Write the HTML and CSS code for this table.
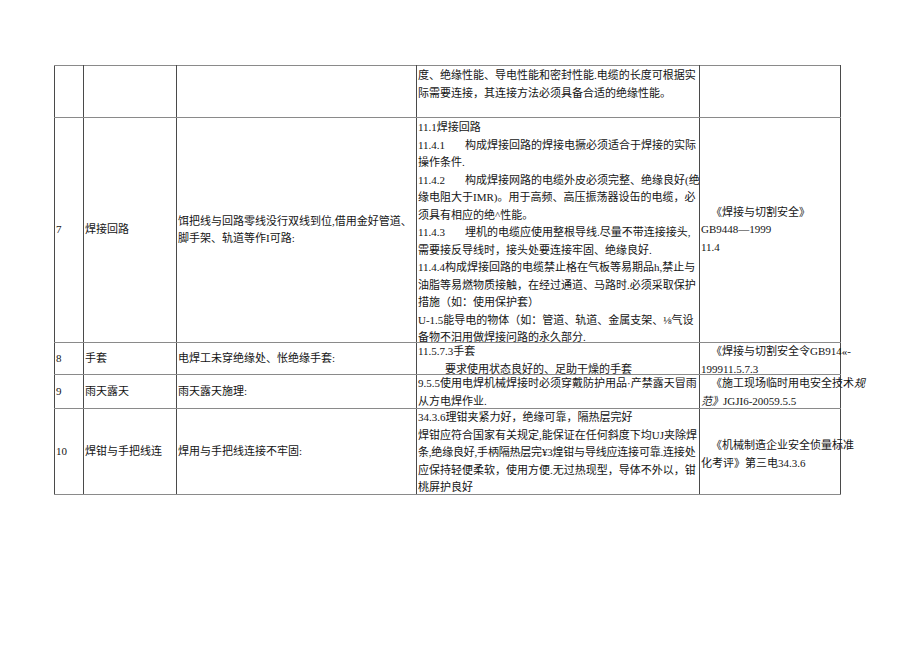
FILE: index.html
```html
<!DOCTYPE html>
<html lang="zh">
<head>
<meta charset="utf-8">
<title>焊接安全检查表</title>
<link rel="stylesheet" href="styles.css">
</head>
<body>
<table class="sheet">
  <colgroup>
    <col class="c-no">
    <col class="c-item">
    <col class="c-issue">
    <col class="c-req">
    <col class="c-ref">
  </colgroup>
  <tr class="r-cont">
    <td></td>
    <td></td>
    <td></td>
    <td class="top">
      <div class="ln">度、绝缘性能、导电性能和密封性能.电缆的长度可根据实</div>
      <div class="ln">际需要连接，其连接方法必须具备合适的绝缘性能。</div>
    </td>
    <td></td>
  </tr>
  <tr class="r7">
    <td class="mid">7</td>
    <td class="mid">焊接回路</td>
    <td class="mid">
      <div class="ln">饵把线与回路零线没行双线到位,借用金好管道、</div>
      <div class="ln">脚手架、轨道等作I可路:</div>
    </td>
    <td class="top">
      <div class="clip h7">
        <div class="ln">11.1焊接回路</div>
        <div class="ln"><span class="num">11.4.1</span>构成焊接回路的焊接电撅必须适合于焊接的实际</div>
        <div class="ln">操作条件.</div>
        <div class="ln"><span class="num">11.4.2</span>构成焊接网路的电缆外皮必须完整、绝缘良好(绝</div>
        <div class="ln">缘电阻大于IMR)。用于高频、高压振荡器设缶的电缆，必</div>
        <div class="ln">须具有相应的绝^性能。</div>
        <div class="ln"><span class="num">11.4.3</span>埋机的电缆应使用整根导线.尽量不带连接接头,</div>
        <div class="ln">需要接反导线时，接头处要连接牢固、绝缘良好.</div>
        <div class="ln">11.4.4构成焊接回路的电缆禁止格在气板等易期品h,禁止与</div>
        <div class="ln">油脂等易燃物质接触，在经过通道、马路时.必须采取保护</div>
        <div class="ln">措施（如：使用保护套）</div>
        <div class="ln">U-1.5能导电的物体（如：管道、轨道、金属支架、⅛气设</div>
        <div class="ln">备物不汨用做焊接问路的永久部分.</div>
      </div>
    </td>
    <td class="mid">
      <div class="ln ind">《焊接与切割安全》</div>
      <div class="ln">GB9448—1999</div>
      <div class="ln">11.4</div>
    </td>
  </tr>
  <tr class="r8">
    <td class="mid">8</td>
    <td class="mid">手套</td>
    <td class="mid">电焊工未穿绝缘处、怅绝缘手套:</td>
    <td class="top">
      <div class="clip h8">
        <div class="ln">11.5.7.3手套</div>
        <div class="ln ind2">要求使用状态良好的、足助干燥的手套</div>
      </div>
    </td>
    <td class="top">
      <div class="fix h8">
        <div class="ln ind">《焊接与切割安全令GB914«-</div>
        <div class="ln">199911.5.7.3</div>
      </div>
    </td>
  </tr>
  <tr class="r9">
    <td class="mid">9</td>
    <td class="mid">雨天露天</td>
    <td class="mid">雨天露天施理:</td>
    <td class="top">
      <div class="fix h9">
        <div class="ln">9.5.5使用电焊机械焊接时必须穿戴防护用品·产禁露天冒雨</div>
        <div class="ln">从方电焊作业.</div>
      </div>
    </td>
    <td class="top">
      <div class="fix h9">
        <div class="ln ind">《施工现场临时用电安全技术<i>规</i></div>
        <div class="ln"><i>范》</i>JGJI6-20059.5.5</div>
      </div>
    </td>
  </tr>
  <tr class="r10">
    <td class="mid">10</td>
    <td class="mid">焊钳与手把线连</td>
    <td class="mid">焊用与手把线连接不牢固:</td>
    <td class="top">
      <div class="clip h10">
        <div class="ln">34.3.6理钳夹紧力好，绝缘可靠，隔热层完好</div>
        <div class="ln">焊钳应符合国家有关规定,能保证在任何斜度下均UJ夹除焊</div>
        <div class="ln tight">条,绝缘良好,手柄隔热层完¥3煌钳与导线应连接可靠.连接处</div>
        <div class="ln">应保持轻便柔软，使用方便.无过热现型，导体不外以，钳</div>
        <div class="ln">桃屏护良好</div>
      </div>
    </td>
    <td class="mid low">
      <div class="ln ind">《机械制造企业安全侦量标准</div>
      <div class="ln">化考评》第三电34.3.6</div>
    </td>
  </tr>
</table>
</body>
</html>
```

FILE: styles.css
```css
html, body {
  margin: 0;
  padding: 0;
  background: #ffffff;
}

body {
  padding: 65px 0 0 54px;
  font-family: "Liberation Serif", "Noto Sans CJK SC", sans-serif;
  font-size: 11px;
  line-height: 17.5px;
  color: #141414;
}

.sheet {
  border-collapse: collapse;
  table-layout: fixed;
  width: 786px;
  border: 1px solid #8e8e8e;
}

.c-no { width: 29px; }
.c-item { width: 93px; }
.c-issue { width: 240px; }
.c-req { width: 283px; }
.c-ref { width: 141px; }

.sheet td {
  padding: 0 0 0 1px;
  border-top: 1px solid #8a8a8a;
  border-bottom: 1px solid #8a8a8a;
  border-left: 1px solid #4a4a4a;
  border-right: 1px solid #4a4a4a;
  white-space: nowrap;
  overflow: visible;
}

.sheet td.top { vertical-align: top; }
.sheet td.mid { vertical-align: middle; }
.sheet td.low { padding-top: 6px; }

.r-cont { height: 52px; }
.r7 { height: 225px; }
.r8 { height: 32px; }
.r9 { height: 34px; }
.r10 { height: 86px; }

.r-cont td.top { padding-top: 1px; }
.r7 td.top { padding-top: 1px; }

.ln {
  white-space: nowrap;
}

.tight {
  letter-spacing: -0.2px;
}

.clip {
  overflow: hidden;
}

.fix {
  overflow: visible;
}

.h7 { height: 223px; }
.h8 { height: 31px; }
.h9 { height: 33px; }
.h10 { height: 85px; }

.num {
  display: inline-block;
  width: 47px;
}

.ind { padding-left: 10px; }
.ind2 { padding-left: 27px; }

i { font-style: italic; }
```
